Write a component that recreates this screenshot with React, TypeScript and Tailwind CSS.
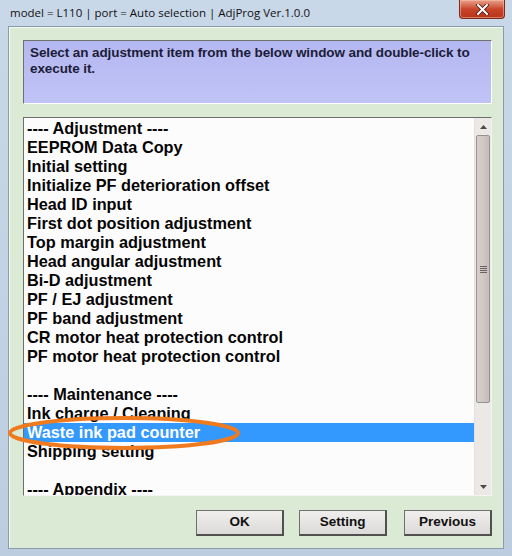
import React from "react";

const items: string[] = [
  "---- Adjustment ----",
  "EEPROM Data Copy",
  "Initial setting",
  "Initialize PF deterioration offset",
  "Head ID input",
  "First dot position adjustment",
  "Top margin adjustment",
  "Head angular adjustment",
  "Bi-D adjustment",
  "PF / EJ adjustment",
  "PF band adjustment",
  "CR motor heat protection control",
  "PF motor heat protection control",
  "",
  "---- Maintenance ----",
  "Ink charge / Cleaning",
  "Waste ink pad counter",
  "Shipping setting",
  "",
  "---- Appendix ----",
];

const selected = 16;

const Scrollbar: React.FC = () => (
  <div className="flex w-[17px] shrink-0 flex-col bg-[#ebe8e6] border-l border-[#e4e0dc]">
    <div className="flex h-[17px] items-center justify-center">
      <svg width="7" height="4" viewBox="0 0 7 4">
        <path d="M0 4 L3.5 0 L7 4 Z" fill="#4a4a4a" />
      </svg>
    </div>
    <div className="mx-[1px] flex h-[268px] items-center justify-center rounded-[2px] border border-[#9a9090] bg-gradient-to-r from-[#d6d0cc] via-[#cfc8c4] to-[#c4bcb8]">
      <div className="flex flex-col gap-[1px]">
        <div className="h-[1px] w-[7px] bg-[#6a6260]" />
        <div className="h-[1px] w-[7px] bg-[#6a6260]" />
        <div className="h-[1px] w-[7px] bg-[#6a6260]" />
        <div className="h-[1px] w-[7px] bg-[#6a6260]" />
      </div>
    </div>
    <div className="flex-1" />
    <div className="flex h-[17px] items-center justify-center">
      <svg width="7" height="4" viewBox="0 0 7 4">
        <path d="M0 0 L3.5 4 L7 0 Z" fill="#4a4a4a" />
      </svg>
    </div>
  </div>
);

const WinButton: React.FC<{ label: string }> = ({ label }) => (
  <button className="flex h-[26px] w-[88px] items-center justify-center border border-[#6f6f6f] border-b-[2px] border-r-[2px] border-b-[#505050] border-r-[#505050] bg-gradient-to-b from-[#f0efee] to-[#dcdad8] text-[13.5px] font-bold text-[#111]">
    {label}
  </button>
);

export default function App() {
  return (
    <div
      className="relative flex h-[556px] w-[512px] flex-col overflow-hidden bg-gradient-to-b from-[#c9d8e8] to-[#bccde0]"
      style={{ fontFamily: '"Liberation Sans", Arial, sans-serif' }}
    >
      {/* title bar */}
      <div className="flex h-[26px] shrink-0 items-start justify-between">
        <span
          className="pl-[10px] pt-[4px] text-[11.5px] text-[#111]"
          style={{ fontFamily: '"Open Sans", "Noto Sans", sans-serif' }}
        >
          model = L110 | port = Auto selection | AdjProg Ver.1.0.0
        </span>
        <div className="mr-[7px] flex h-[19px] w-[46px] items-center justify-center rounded-b-[4px] border border-t-0 border-[#7a2a1a] bg-gradient-to-b from-[#e8a08c] via-[#c8452a] to-[#b83418] shadow-[inset_0_0_0_1px_rgba(255,200,180,0.5)]">
          <svg width="13" height="11" viewBox="0 0 13 11">
            <path d="M2 1 L11 10 M11 1 L2 10" stroke="#4a1a10" strokeWidth="3.6" strokeLinecap="round" />
            <path d="M2 1 L11 10 M11 1 L2 10" stroke="#ffffff" strokeWidth="2" strokeLinecap="round" />
          </svg>
        </div>
      </div>

      {/* client area */}
      <div className="mx-[8px] mb-[7px] flex flex-1 flex-col border border-[#8b9bab] bg-[#dbead4] pl-[14px] pr-[11px] pt-[13px] shadow-[inset_1px_1px_0_#f4faf0]">
        <div className="h-[64px] shrink-0 border border-[#707070] border-b-white border-r-white bg-gradient-to-b from-[#b4b8f0] to-[#c0c3f6] px-[6px] pt-[4px] text-[13.5px] font-bold leading-[16px] tracking-[-0.1px] text-[#1c1c38]">
          Select an adjustment item from the below window and double-click to execute it.
        </div>

        <div className="mt-[13px] flex h-[379px] shrink-0 border border-[#6e6e6e] border-b-[#f4f4f4] border-r-[#f4f4f4] bg-[#fdfcfc]">
          <div className="flex-1 overflow-hidden pt-[1px]">
            {items.map((item, i) => (
              <div
                key={i}
                className={`h-[19px] whitespace-nowrap pl-[3px] text-[16.3px] font-bold leading-[19px] ${
                  i === selected ? "bg-[#3399ff] text-white" : "text-[#050505]"
                }`}
              >
                {item || "\u00a0"}
              </div>
            ))}
          </div>
          <Scrollbar />
        </div>

        <div className="flex justify-end pt-[14px]">
          <WinButton label="OK" />
          <div className="w-[15px]" />
          <WinButton label="Setting" />
          <div className="w-[17px]" />
          <WinButton label="Previous" />
        </div>
      </div>

      {/* orange highlight ring */}
      <svg className="pointer-events-none absolute left-[5px] top-[414px]" width="240" height="40" viewBox="0 0 240 40">
        <ellipse cx="119" cy="19" rx="114" ry="15" fill="none" stroke="#f07a1e" strokeWidth="4" />
      </svg>
    </div>
  );
}
